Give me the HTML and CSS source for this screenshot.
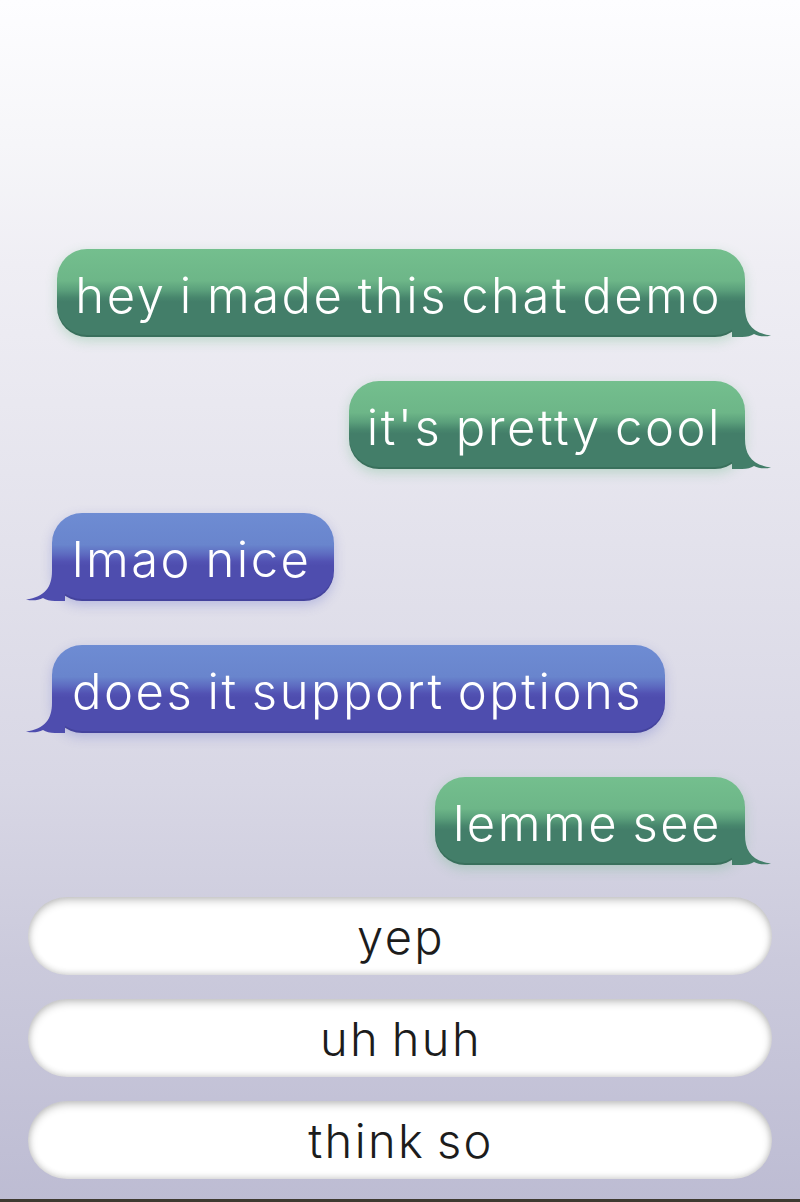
FILE: index.html
```html
<!DOCTYPE html>
<html>
<head>
<meta charset="utf-8">
<link rel="stylesheet" href="styles.css">
</head>
<body>
<div class="chat">
  <div class="messages">
    <div class="msg me">hey i made this chat demo<svg class="tail" viewBox="0 0 40 36" width="40" height="36"><path d="M0,0 L13,0 L13,6 C13,22 20,32 39,34.5 C33,36 27,35.5 22,33 C19,35 15,36 10,36 L0,36 Z"/></svg></div>
    <div class="msg me">it's pretty cool<svg class="tail" viewBox="0 0 40 36" width="40" height="36"><path d="M0,0 L13,0 L13,6 C13,22 20,32 39,34.5 C33,36 27,35.5 22,33 C19,35 15,36 10,36 L0,36 Z"/></svg></div>
    <div class="msg them">lmao nice<svg class="tail" viewBox="0 0 40 36" width="40" height="36"><path d="M0,0 L13,0 L13,6 C13,22 20,32 39,34.5 C33,36 27,35.5 22,33 C19,35 15,36 10,36 L0,36 Z"/></svg></div>
    <div class="msg them">does it support options<svg class="tail" viewBox="0 0 40 36" width="40" height="36"><path d="M0,0 L13,0 L13,6 C13,22 20,32 39,34.5 C33,36 27,35.5 22,33 C19,35 15,36 10,36 L0,36 Z"/></svg></div>
    <div class="msg me">lemme see<svg class="tail" viewBox="0 0 40 36" width="40" height="36"><path d="M0,0 L13,0 L13,6 C13,22 20,32 39,34.5 C33,36 27,35.5 22,33 C19,35 15,36 10,36 L0,36 Z"/></svg></div>
  </div>
  <div class="options">
    <button class="option">yep</button>
    <button class="option">uh huh</button>
    <button class="option">think so</button>
  </div>
</div>
</body>
</html>
```
FILE: styles.css
```css
html, body {
  margin: 0;
  padding: 0;
}
body {
  height: 1202px;
  overflow: hidden;
  background: linear-gradient(180deg, #fdfdff 0%, #f6f6f9 12%, #efeef4 22%, #e3e2ec 45%, #d8d7e5 65%, #cbcadc 80%, #bdbcd3 100%);
  font-family: "Inter", "Noto Sans", sans-serif;
}
.chat {
  box-sizing: border-box;
  height: 1202px;
  display: flex;
  flex-direction: column;
  justify-content: flex-end;
  padding: 0 28px 20px;
  border-bottom: 3px solid #3e3a31;
}
.messages {
  display: flex;
  flex-direction: column;
  gap: 44px;
  margin: 0 -28px 32px -28px;
  padding: 0 55px 0 52px;
}
.msg {
  position: relative;
  box-sizing: border-box;
  height: 88px;
  border-radius: 30px;
  padding: 5px 23px 0 18px;
  display: flex;
  align-items: center;
  color: #fff;
  font-size: 49px;
  font-weight: 300;
  letter-spacing: 2.5px;
  word-spacing: -3px;
  white-space: nowrap;
}
.msg.me {
  align-self: flex-end;
  background: linear-gradient(180deg, #74bf8e 0%, #6db688 36%, #5a9f7b 47%, #48876d 55%, #437e69 60%, #437e69 100%);
  box-shadow: inset 0 -2px 0 rgba(20, 60, 40, 0.2), 0 4px 12px rgba(90, 180, 120, 0.3);
}
.msg.them {
  align-self: flex-start;
  padding: 5px 22px 0 20px;
  background: linear-gradient(180deg, #6e8cd3 0%, #6985cd 36%, #5d6ac0 47%, #5252b3 55%, #4e4dae 60%, #4e4dae 100%);
  box-shadow: inset 0 -2px 0 rgba(30, 30, 90, 0.2), 0 4px 12px rgba(90, 100, 200, 0.3);
}
.tail {
  position: absolute;
  bottom: 0;
}
.msg.me .tail {
  right: -27px;
  fill: #437e69;
}
.msg.them .tail {
  left: -27px;
  transform: scaleX(-1);
  fill: #4e4dae;
}
.options {
  display: flex;
  flex-direction: column;
  gap: 24px;
}
.option {
  height: 78px;
  border: none;
  border-radius: 39px;
  background: #fff;
  box-shadow: inset 0 3px 8px rgba(0, 0, 0, 0.25), inset 0 -2px 6px rgba(0, 0, 0, 0.12);
  font-family: "Inter", "Noto Sans", sans-serif;
  font-size: 47px;
  font-weight: 350;
  letter-spacing: 2.4px;
  word-spacing: -4px;
  color: #1c1c1c;
  padding: 0 0 0 2px;
}
```
